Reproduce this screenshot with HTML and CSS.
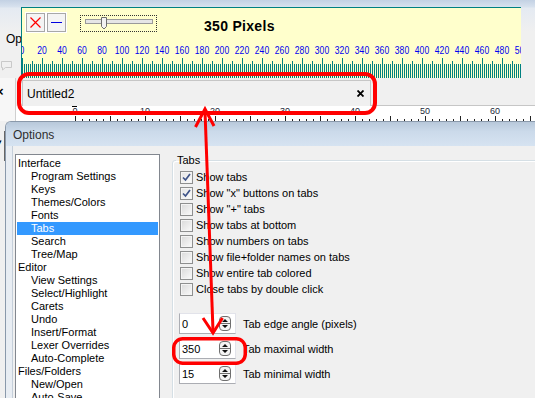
FILE: index.html
```html
<!DOCTYPE html>
<html lang="en">
<head>
    <meta charset="UTF-8">
    <title>Options - Tabs</title>
    <link rel="stylesheet" href="styles.css">
</head>
<body>
    <!-- Editor window behind everything -->
    <div class="app">
        <div class="app-head">
            <div class="menu-item">Options</div>
            <svg class="bubble" width="13" height="11" viewBox="0 0 13 11">
                <path d="M1.5 1.5h10v6h-6l-3 2.5v-2.5h-1z" fill="none" stroke="#c9c9c9"/>
            </svg>
        </div>
        <div class="work">
            <div class="side"><span class="side-x">×</span></div>
            <div class="doc">
                <div class="tabbar">
                    <div class="tab">
                        <span>Untitled2</span>
                        <svg class="tab-close" width="7" height="7" viewBox="0 0 7 7">
                            <path d="M0.5 0.5l6 6M6.5 0.5l-6 6" stroke="#000" stroke-width="1.8"/>
                        </svg>
                    </div>
                    <div class="tab-rest"></div>
                </div>
                <div class="ruler">
                    <div class="ruler-nums">
                        <span class="caret">0</span><span>10</span><span>20</span><span>30</span><span>40</span><span>50</span><span>60</span>
                    </div>
                    <div class="ruler-ticks"></div>
                </div>
            </div>
        </div>
        <div class="editor">
            <div class="editor-edge">▾</div>
        </div>
    </div>

    <!-- Pixel ruler tool window -->
    <div class="pixwin">
        <div class="pix-tools">
            <div class="tool">
                <svg width="11" height="11" viewBox="0 0 11 11"><path d="M0.5 0.5l10 10M10.5 0.5l-10 10" stroke="#ff0000" stroke-width="1.2"/></svg>
            </div>
            <div class="tool">
                <svg width="11" height="11" viewBox="0 0 11 11"><path d="M0 5.5h11" stroke="#0000e0"/></svg>
            </div>
            <div class="slider">
                <svg width="75" height="15" viewBox="0 0 75 15">
                    <rect x="4.5" y="3.5" width="67" height="4" fill="#e6e6e6" stroke="#9a9a9a"/>
                    <path d="M20.5 1.5h5v9l-2.5 2.5l-2.5-2.5z" fill="#f2f2f2" stroke="#6e6e6e"/>
                </svg>
            </div>
            <div class="pix-value">350 Pixels</div>
        </div>
        <div class="pix-nums">
            <span>0</span><span>20</span><span>40</span><span>60</span><span>80</span><span>100</span><span>120</span><span>140</span><span>160</span><span>180</span><span>200</span><span>220</span><span>240</span><span>260</span><span>280</span><span>300</span><span>320</span><span>340</span><span>360</span><span>380</span><span>400</span><span>420</span><span>440</span><span>460</span><span>480</span><span>500</span>
        </div>
        <div class="pix-ticks"></div>
    </div>

    <!-- Options dialog -->
    <div class="dialog">
        <div class="dlg-title">Options</div>
        <div class="dlg-frame">
            <div class="dlg-client">
                <ul class="tree">
                    <li>Interface</li>
                    <li class="sub">Program Settings</li>
                    <li class="sub">Keys</li>
                    <li class="sub">Themes/Colors</li>
                    <li class="sub">Fonts</li>
                    <li class="sub selected">Tabs</li>
                    <li class="sub">Search</li>
                    <li class="sub">Tree/Map</li>
                    <li>Editor</li>
                    <li class="sub">View Settings</li>
                    <li class="sub">Select/Highlight</li>
                    <li class="sub">Carets</li>
                    <li class="sub">Undo</li>
                    <li class="sub">Insert/Format</li>
                    <li class="sub">Lexer Overrides</li>
                    <li class="sub">Auto-Complete</li>
                    <li>Files/Folders</li>
                    <li class="sub">New/Open</li>
                    <li class="sub">Auto-Save</li>
                </ul>
                <fieldset class="group">
                    <legend>Tabs</legend>
                    <div class="checks">
                        <div class="check"><span class="box on"><svg width="11" height="11" viewBox="0 0 11 11"><path d="M2 5.5l2.5 2.5l4.5-6" fill="none" stroke="#3f5489" stroke-width="1.7"/></svg></span>Show tabs</div>
                        <div class="check"><span class="box on"><svg width="11" height="11" viewBox="0 0 11 11"><path d="M2 5.5l2.5 2.5l4.5-6" fill="none" stroke="#3f5489" stroke-width="1.7"/></svg></span>Show "x" buttons on tabs</div>
                        <div class="check"><span class="box"></span>Show "+" tabs</div>
                        <div class="check"><span class="box"></span>Show tabs at bottom</div>
                        <div class="check"><span class="box"></span>Show numbers on tabs</div>
                        <div class="check"><span class="box"></span>Show file+folder names on tabs</div>
                        <div class="check"><span class="box"></span>Show entire tab colored</div>
                        <div class="check"><span class="box"></span>Close tabs by double click</div>
                    </div>
                    <div class="spins">
                        <div class="spin-row">
                            <div class="spin"><span>0</span><svg width="12" height="15" viewBox="0 0 12 15"><rect x="0.5" y="0.5" width="11" height="14" rx="3.5" fill="#f4f4f4" stroke="#6f6f6f"/><path d="M1 7.5h10" stroke="#6f6f6f"/><path d="M3 6l3-3l3 3z M3 9l3 3l3-3z" fill="#111"/></svg></div>
                            <span>Tab edge angle (pixels)</span>
                        </div>
                        <div class="spin-row">
                            <div class="spin"><span>350</span><svg width="12" height="15" viewBox="0 0 12 15"><rect x="0.5" y="0.5" width="11" height="14" rx="3.5" fill="#f4f4f4" stroke="#6f6f6f"/><path d="M1 7.5h10" stroke="#6f6f6f"/><path d="M3 6l3-3l3 3z M3 9l3 3l3-3z" fill="#111"/></svg></div>
                            <span>Tab maximal width</span>
                        </div>
                        <div class="spin-row">
                            <div class="spin"><span>15</span><svg width="12" height="15" viewBox="0 0 12 15"><rect x="0.5" y="0.5" width="11" height="14" rx="3.5" fill="#f4f4f4" stroke="#6f6f6f"/><path d="M1 7.5h10" stroke="#6f6f6f"/><path d="M3 6l3-3l3 3z M3 9l3 3l3-3z" fill="#111"/></svg></div>
                            <span>Tab minimal width</span>
                        </div>
                    </div>
                </fieldset>
            </div>
        </div>
    </div>

    <!-- Red annotation marks on top -->
    <svg class="marks" width="535" height="398" viewBox="0 0 535 398">
        <rect x="19" y="74" width="356" height="39" rx="10" fill="none" stroke="#ff0000" stroke-width="4"/>
        <rect x="173.75" y="338.75" width="71.5" height="24.5" rx="9" fill="none" stroke="#ff0000" stroke-width="3.5"/>
        <path d="M205 111L213 331" stroke="#ff0000" stroke-width="3"/>
        <path d="M195.5 127L205 109L214 126" fill="none" stroke="#ff0000" stroke-width="3"/>
        <path d="M203 318L213 333L222.5 318" fill="none" stroke="#ff0000" stroke-width="3"/>
    </svg>
</body>
</html>
```
FILE: styles.css
```css
* {
    box-sizing: border-box;
}

body {
    margin: 0;
    width: 535px;
    height: 398px;
    overflow: hidden;
    position: relative;
    background: #f0f0f0;
    color: #000;
    font-family: "Liberation Sans", Arial, sans-serif;
    font-size: 11px;
}

/* Editor behind */
.app {
    height: 398px;
    display: flex;
    flex-direction: column;
}

.app-head {
    height: 78px;
    flex: none;
    padding: 32px 0 0 6px;
    background: linear-gradient(#c3d1e4 0, #d8e2ee 7px, #e4eaf2 8px, #f0f0f0 32px);
}

.menu-item {
    font-size: 12px;
    line-height: 14px;
}

.bubble {
    display: block;
    margin: 14px 0 0 -6px;
}

.work {
    height: 43px;
    flex: none;
    display: flex;
}

.side {
    width: 16px;
    flex: none;
    background: #f7f7f7;
    border-right: 1px solid #cfcfcf;
    overflow: hidden;
    padding-top: 6px;
}

.side-x {
    display: block;
    margin-left: -4px;
    font-size: 13px;
    font-weight: bold;
}

.doc {
    flex: 1;
    display: flex;
    flex-direction: column;
}

.tabbar {
    height: 28px;
    display: flex;
    align-items: flex-end;
}

.tab {
    width: 349px;
    height: 26px;
    margin-left: 6px;
    padding: 0 6px 0 4px;
    border: 1px solid #c6c6c6;
    border-bottom: none;
    display: flex;
    align-items: center;
    justify-content: space-between;
    font-size: 12px;
}

.tab-rest {
    flex: 1;
    height: 28px;
    border-bottom: 1px solid #c6c6c6;
}

.ruler {
    height: 15px;
    background: #fff;
    display: flex;
    flex-direction: column;
    justify-content: space-between;
}

.ruler-nums {
    display: flex;
    padding: 1px 0 0 24px;
    font-size: 9px;
    line-height: 8px;
    color: #1c2a3a;
}

.ruler-nums span {
    width: 70px;
    flex: none;
    text-align: center;
}

.caret {
    position: relative;
}

.caret::before {
    content: "";
    position: absolute;
    left: 32px;
    top: -1px;
    width: 5px;
    height: 1px;
    background: #000;
}

.ruler-ticks {
    height: 5px;
    margin-left: 59px;
    background:
        linear-gradient(90deg, #222 1px, transparent 1px) 0 100% / 35px 5px repeat-x,
        linear-gradient(90deg, #222 1px, transparent 1px) 0 100% / 7px 2px repeat-x;
}

.editor {
    flex: 1;
}

.editor-edge {
    width: 5px;
    height: 30px;
    margin-top: 10px;
    border-right: 1px solid #666;
    font-size: 9px;
    line-height: 10px;
    overflow: hidden;
    text-indent: -3px;
    padding-top: 6px;
}

/* Pixel ruler window */
.pixwin {
    position: absolute;
    left: 21px;
    top: 7px;
    width: 500px;
    height: 71px;
    background: #ffffcc;
    border-top: 1px solid #008080;
    border-left: 1px solid #008080;
    overflow: hidden;
}

.pix-tools {
    display: flex;
    padding: 5px 0 0 4px;
    height: 24px;
}

.tool {
    width: 19px;
    height: 19px;
    margin-right: 2px;
    background: #f4f4f4;
    border: 1px solid #a8a8a8;
    outline: 1px solid #fff;
    display: flex;
    align-items: center;
    justify-content: center;
}

.slider {
    width: 77px;
    height: 17px;
    margin: 2px 0 0 12px;
    border: 1px dotted #333;
}

.slider svg {
    display: block;
}

.pix-value {
    margin: 5px 0 0 47px;
    font-size: 14px;
    font-weight: bold;
    letter-spacing: 0.3px;
}

.pix-nums {
    display: flex;
    height: 14px;
    margin: 11px 0 0 -10px;
    color: #0000f0;
    font-size: 11px;
    line-height: 14px;
}

.pix-nums span {
    width: 20px;
    flex: none;
    text-align: center;
    transform: scaleX(0.78);
    white-space: nowrap;
}

.pix-ticks {
    height: 21px;
    background:
        linear-gradient(90deg, #008080 1px, transparent 1px) 0 100% / 20px 20px repeat-x,
        linear-gradient(90deg, #008080 1px, transparent 1px) 0 100% / 10px 17px repeat-x,
        linear-gradient(90deg, #008080 1px, transparent 1px) 0 100% / 2px 14px repeat-x;
}

/* Options dialog */
.dialog {
    position: absolute;
    left: 5px;
    top: 121px;
    width: 540px;
    height: 290px;
    border-left: 1px solid #8a99ab;
    border-top: 1px solid #8a99ab;
    border-top-left-radius: 6px;
    overflow: hidden;
    display: flex;
    flex-direction: column;
}

.dlg-title {
    height: 24px;
    flex: none;
    padding: 5px 0 0 7px;
    font-size: 12px;
    line-height: 16px;
    color: #2e2e2e;
    background: linear-gradient(#b8c8da, #cbdaea 40%, #d6e3f1);
}

.dlg-frame {
    flex: 1;
    padding-left: 6px;
    background: #e8edf3;
}

.dlg-client {
    height: 100%;
    background: #f0f0f0;
    border-left: 1px solid #c5cfda;
    display: flex;
    gap: 12px;
    padding: 8px 0 0 2px;
}

.tree {
    width: 145px;
    flex: none;
    margin: 0;
    padding: 2px 1px 0;
    list-style: none;
    background: #fff;
    border: 1px solid #82878f;
    border-bottom: none;
}

.tree li {
    height: 13px;
    line-height: 13px;
    padding-left: 1px;
    white-space: nowrap;
}

.tree .sub {
    padding-left: 14px;
}

.tree .selected {
    background: #3399ff;
    color: #fff;
}

.group {
    width: 420px;
    flex: none;
    margin: 0;
    padding: 0;
    border: 1px solid #d5dfe5;
    border-radius: 3px;
    box-shadow: inset 1px 1px 0 #fff;
}

.group legend {
    margin-left: 3px;
    padding: 0 1px;
    line-height: 13px;
}

.checks {
    padding: 2px 0 0 7px;
}

.check {
    height: 16px;
    display: flex;
    align-items: center;
    gap: 3px;
}

.box {
    width: 13px;
    height: 13px;
    flex: none;
    border: 1px solid #8e8f8f;
    background: linear-gradient(135deg, #d9d9d9, #fbfbfb);
    box-shadow: inset 0 0 0 1px #f4f4f4;
    display: flex;
    align-items: center;
    justify-content: center;
}

.box.on {
    background: linear-gradient(135deg, #e3e3e3, #fdfdfd);
}

.spins {
    padding: 16px 0 0 6px;
    display: flex;
    flex-direction: column;
    gap: 4px;
}

.spin-row {
    display: flex;
    align-items: center;
    gap: 7px;
}

.spin {
    width: 57px;
    height: 21px;
    background: #fff;
    border: 1px solid #abadb3;
    border-top-color: #e2e3ea;
    border-right-color: #e2e3ea;
    display: flex;
    align-items: center;
    justify-content: space-between;
    padding: 0 4px 0 2px;
}

.spin svg {
    display: block;
}

/* Annotations */
.marks {
    position: absolute;
    left: 0;
    top: 0;
    pointer-events: none;
}
```
